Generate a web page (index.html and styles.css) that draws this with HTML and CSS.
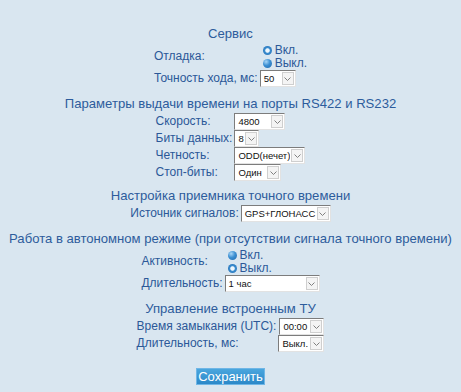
FILE: index.html
```html
<!DOCTYPE html>
<html lang="ru">
<head>
<meta charset="utf-8">
<title>Настройки</title>
<link rel="stylesheet" href="styles.css">
</head>
<body>
<div class="page">
  <h2 class="title">Сервис</h2>
  <div class="form">
    <span class="label">Отладка:</span>
    <div class="radios">
      <div class="radio"><span class="dot dot-ring"></span>Вкл.</div>
      <div class="radio"><span class="dot dot-solid"></span>Выкл.</div>
    </div>
    <span class="label">Точность хода, мс:</span>
    <span class="sel w36"><span class="val">50</span><span class="arr"></span></span>
  </div>

  <h2 class="title">Параметры выдачи времени на порты RS422 и RS232</h2>
  <div class="form compact">
    <span class="label">Скорость:</span>
    <span class="sel w51"><span class="val">4800</span><span class="arr"></span></span>
    <span class="label">Биты данных:</span>
    <span class="sel w25"><span class="val">8</span><span class="arr"></span></span>
    <span class="label">Четность:</span>
    <span class="sel w71"><span class="val">ODD(нечет)</span><span class="arr"></span></span>
    <span class="label">Стоп-биты:</span>
    <span class="sel w47"><span class="val">Один</span><span class="arr"></span></span>
  </div>

  <h2 class="title">Настройка приемника точного времени</h2>
  <div class="form">
    <span class="label">Источник сигналов:</span>
    <span class="sel w90"><span class="val">GPS+ГЛОНАСС</span><span class="arr"></span></span>
  </div>

  <h2 class="title">Работа в автономном режиме (при отсутствии сигнала точного времени)</h2>
  <div class="form">
    <span class="label">Активность:</span>
    <div class="radios">
      <div class="radio"><span class="dot dot-solid"></span>Вкл.</div>
      <div class="radio"><span class="dot dot-ring"></span>Выкл.</div>
    </div>
    <span class="label">Длительность:</span>
    <span class="sel w95"><span class="val">1 час</span><span class="arr"></span></span>
  </div>

  <h2 class="title">Управление встроенным ТУ</h2>
  <div class="form">
    <span class="label">Время замыкания (UTC):</span>
    <span class="sel w45 end"><span class="val">00:00</span><span class="arr"></span></span>
    <span class="label">Длительность, мс:</span>
    <span class="sel w46 end"><span class="val">Выкл.</span><span class="arr"></span></span>
  </div>

  <div class="actions">
    <button class="btn" type="button">Сохранить</button>
  </div>
</div>
</body>
</html>
```

FILE: styles.css
```css
html, body {
  margin: 0;
  padding: 0;
  background: #d9e6f0;
}
body {
  font-family: "Liberation Sans", Arial, sans-serif;
  color: #2b5898;
}
.page {
  padding-top: 25px;
  display: flex;
  flex-direction: column;
  align-items: center;
}
.title {
  margin: 8px 0 0;
  font-size: 13.1px;
  font-weight: normal;
  line-height: 18px;
  height: 18px;
  color: #2d5c9c;
  text-align: center;
  white-space: nowrap;
}
.page > .title:first-child {
  margin-top: 0;
}
.form {
  display: grid;
  grid-template-columns: auto auto;
  column-gap: 2px;
  align-items: center;
  justify-content: center;
}
.form.compact {
  margin-bottom: -2px;
}
.label {
  font-size: 12px;
  line-height: 17px;
  white-space: nowrap;
}
.radios {
  display: flex;
  flex-direction: column;
  padding-left: 3px;
  padding-top: 1px;
}
.radio {
  display: flex;
  align-items: center;
  font-size: 12px;
  line-height: 13px;
  height: 13px;
}
.dot {
  width: 9px;
  height: 9px;
  border-radius: 50%;
  margin-right: 3px;
  box-sizing: border-box;
}
.dot-solid {
  background: radial-gradient(circle at 35% 30%, #a8d6f7 0, #3b8fd2 45%, #1f68ad 100%);
}
.dot-ring {
  background: radial-gradient(circle at 50% 50%, #eef6fc 0, #eef6fc 28%, #3a8dd0 42%, #1f68ad 100%);
}
.sel {
  display: inline-flex;
  align-items: stretch;
  height: 17px;
  box-sizing: border-box;
  background: #fff;
  border-top: 1px solid #7c7c7c;
  border-left: 1px solid #7c7c7c;
  border-right: 1px solid #e2e2e2;
  border-bottom: 1px solid #e2e2e2;
  justify-self: start;
}
.sel.end {
  justify-self: end;
}
.val {
  flex: 1;
  font-size: 9.5px;
  line-height: 15px;
  color: #111;
  padding-left: 3px;
  white-space: nowrap;
  overflow: hidden;
}
.arr {
  flex: none;
  width: 12px;
  margin: 1px;
  box-sizing: border-box;
  border: 1px solid #cfcfcf;
  background: #f4f4f4 url("data:image/svg+xml;utf8,<svg xmlns='http://www.w3.org/2000/svg' width='7' height='4'><path d='M0.5 0.5 L3.5 3.5 L6.5 0.5' fill='none' stroke='%23808080' stroke-width='1'/></svg>") center no-repeat;
}
.w25 { width: 25px; }
.w36 { width: 36px; }
.w45 { width: 45px; }
.w46 { width: 46px; }
.w47 { width: 47px; }
.w51 { width: 51px; }
.w71 { width: 71px; }
.w90 { width: 90px; }
.w95 { width: 95px; }
.actions {
  margin-top: 15px;
}
.btn {
  font-family: "Liberation Sans", Arial, sans-serif;
  font-size: 13px;
  color: #fff;
  height: 17px;
  width: 69px;
  padding: 0;
  line-height: 15px;
  border: 1px solid #6fb6e6;
  background: linear-gradient(#4aa6de, #2b88c8);
}
```
